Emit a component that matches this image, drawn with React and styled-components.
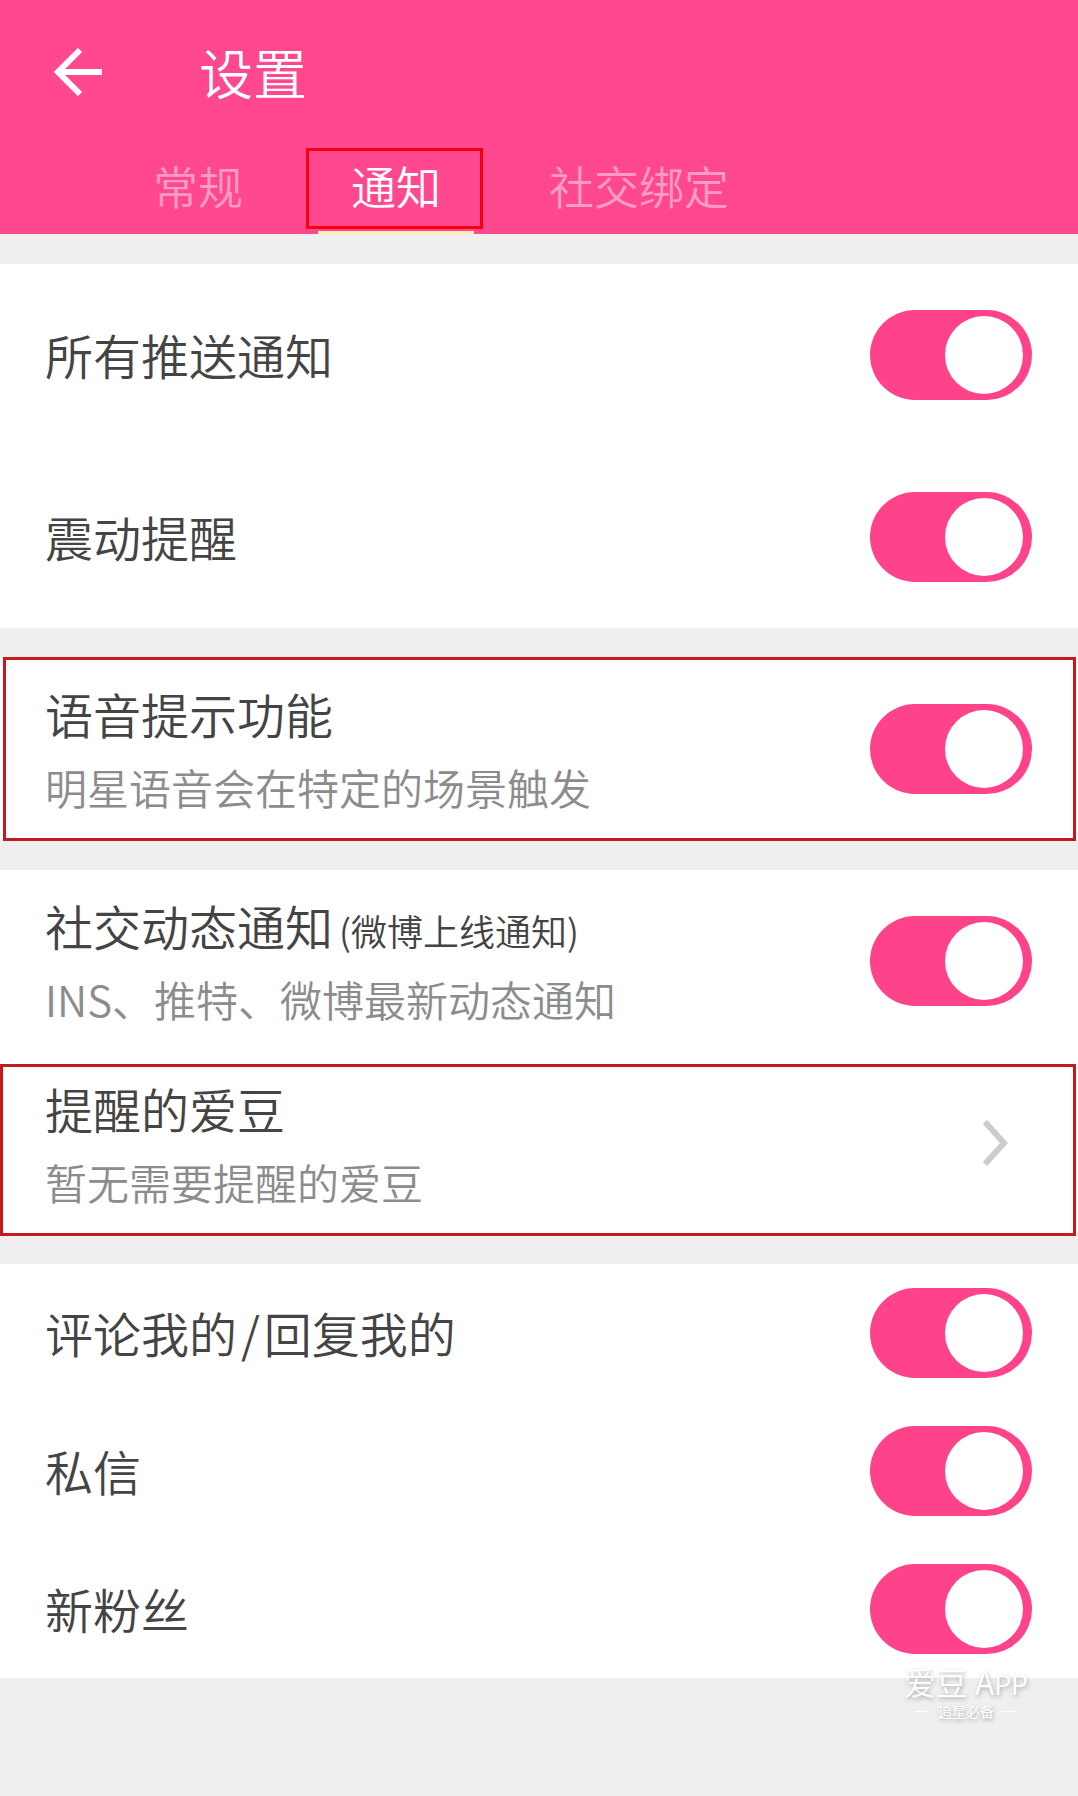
import React, { useState } from "react";
import styled, { createGlobalStyle } from "styled-components";

const GlobalStyle = createGlobalStyle`
  * {
    box-sizing: border-box;
  }

  body {
    margin: 0;
    background: #efefef;
    font-family: "Noto Sans CJK SC", "Noto Sans", sans-serif;
    font-weight: 350;
  }

  button {
    border: 0;
    padding: 0;
    background: none;
    font-family: inherit;
    font-weight: inherit;
    cursor: pointer;
  }
`;

const Page = styled.div`
  position: relative;
  min-height: 100vh;
  padding-bottom: 118px;
  background: #efefef;
`;

const Header = styled.header`
  background: #ff488d;
  color: #fff;
`;

const TitleBar = styled.div`
  display: flex;
  align-items: center;
  height: 144px;
  padding-left: 54px;
`;

const BackButton = styled.button`
  display: flex;
  width: 48px;
  height: 48px;
  margin-right: 97px;
  color: #fff;
`;

const Title = styled.h1`
  margin: 0;
  font-size: 54px;
  font-weight: 350;
  line-height: 80px;
`;

const Tabs = styled.div`
  display: flex;
  gap: 42px;
  height: 90px;
  padding-left: 120px;
`;

const Tab = styled.button`
  position: relative;
  padding: 0 33px 4px;
  border-bottom: 3px solid ${(props) => (props.$active ? "#fdeeb5" : "transparent")};
  color: ${(props) => (props.$active ? "#fff" : "#ff9cc3")};
  font-size: 45px;
  line-height: 80px;
  white-space: nowrap;
`;

const Mark = styled.span`
  position: absolute;
  inset: ${(props) => props.$inset};
  border: 3px solid ${(props) => props.$color || "#c41a1d"};
  pointer-events: none;
`;

const Section = styled.section`
  margin-top: 30px;
  background: #fff;
`;

const Row = styled.div`
  position: relative;
  display: flex;
  align-items: center;
  justify-content: space-between;
  width: 100%;
  height: ${(props) => (props.$compact ? "138px" : "182px")};
  padding: 0 46px 0 45px;
  text-align: left;

  label {
    padding-bottom: 2px;
  }
`;

const LinkRow = styled(Row)`
  padding-right: 70px;
`;

const Texts = styled.span`
  display: flex;
  flex-direction: column;
`;

const Name = styled.span`
  color: #444;
  font-size: 48px;
  line-height: 78px;
`;

const Extra = styled.small`
  margin-left: 6px;
  font-size: 36px;
  line-height: 1;
`;

const Slash = styled.span`
  padding: 0 4px;
`;

const Hint = styled.span`
  color: #8c8c8c;
  font-size: 42px;
  line-height: 70px;
`;

const Switch = styled.input`
  appearance: none;
  flex: none;
  display: flex;
  align-items: center;
  width: 162px;
  height: 90px;
  margin: 0;
  padding: 0 9px;
  border-radius: 45px;
  background: #ccc;
  cursor: pointer;

  &::before {
    content: "";
    width: 78px;
    height: 78px;
    border-radius: 50%;
    background: #fff;
  }

  &:checked {
    justify-content: flex-end;
    background: #ff438b;
  }
`;

const Watermark = styled.div`
  position: absolute;
  right: 50px;
  bottom: 76px;
  display: flex;
  flex-direction: column;
  align-items: center;
  color: #fff;
  text-shadow: 1px 2px 4px rgba(0, 0, 0, 0.3);
`;

const Brand = styled.span`
  font-size: 32px;
  line-height: 36px;

  small {
    font-size: 27px;
  }
`;

const Slogan = styled.span`
  display: flex;
  align-items: center;
  gap: 8px;
  font-size: 14px;
  font-weight: 400;
  line-height: 18px;

  &::before,
  &::after {
    content: "";
    width: 15px;
    height: 1px;
    background: #fff;
  }
`;

const ArrowLeft = () => (
  <svg width="48" height="48" viewBox="0 0 48 48" fill="none" stroke="currentColor" strokeWidth="6">
    <path d="M26 2L4 24l22 22M4 24h44" />
  </svg>
);

const Chevron = () => (
  <svg width="25" height="46" viewBox="0 0 25 46" fill="none" stroke="#ccc" strokeWidth="6">
    <path d="M2 2l19 21L2 44" />
  </svg>
);

const tabs = ["常规", "通知", "社交绑定"];

const initialValues = {
  push: true,
  vibrate: true,
  voice: true,
  social: true,
  comment: true,
  message: true,
  fans: true,
};

const App = () => {
  const [active, setActive] = useState("通知");
  const [values, setValues] = useState(initialValues);

  const handleChange = (e) => {
    setValues({ ...values, [e.target.name]: e.target.checked });
  };

  const renderSwitch = (name) => (
    <Switch type="checkbox" id={name} name={name} checked={values[name]} onChange={handleChange} />
  );

  return (
    <Page>
      <GlobalStyle />
      <Header>
        <TitleBar>
          <BackButton aria-label="返回">
            <ArrowLeft />
          </BackButton>
          <Title>设置</Title>
        </TitleBar>
        <Tabs role="tablist">
          {tabs.map((tab) => (
            <Tab
              key={tab}
              role="tab"
              aria-selected={tab === active}
              $active={tab === active}
              onClick={() => setActive(tab)}
            >
              {tab}
              {tab === active && <Mark $inset="4px -9px 2px -12px" $color="#f5000f" />}
            </Tab>
          ))}
        </Tabs>
      </Header>

      <Section>
        <Row>
          <Name as="label" htmlFor="push">所有推送通知</Name>
          {renderSwitch("push")}
        </Row>
        <Row>
          <Name as="label" htmlFor="vibrate">震动提醒</Name>
          {renderSwitch("vibrate")}
        </Row>
      </Section>

      <Section>
        <Row>
          <Texts as="label" htmlFor="voice">
            <Name>语音提示功能</Name>
            <Hint>明星语音会在特定的场景触发</Hint>
          </Texts>
          {renderSwitch("voice")}
          <Mark $inset="-1px 2px -1px 3px" />
        </Row>
      </Section>

      <Section>
        <Row>
          <Texts as="label" htmlFor="social">
            <Name>
              社交动态通知<Extra>(微博上线通知)</Extra>
            </Name>
            <Hint>INS、推特、微博最新动态通知</Hint>
          </Texts>
          {renderSwitch("social")}
        </Row>
        <LinkRow as="button">
          <Texts>
            <Name>提醒的爱豆</Name>
            <Hint>暂无需要提醒的爱豆</Hint>
          </Texts>
          <Chevron />
          <Mark $inset="12px 2px -2px 0" />
        </LinkRow>
      </Section>

      <Section>
        <Row $compact>
          <Name as="label" htmlFor="comment">
            评论我的<Slash>/</Slash>回复我的
          </Name>
          {renderSwitch("comment")}
        </Row>
        <Row $compact>
          <Name as="label" htmlFor="message">私信</Name>
          {renderSwitch("message")}
        </Row>
        <Row $compact>
          <Name as="label" htmlFor="fans">新粉丝</Name>
          {renderSwitch("fans")}
        </Row>
      </Section>

      <Watermark>
        <Brand>
          爱豆 A<small>PP</small>
        </Brand>
        <Slogan>追星必备</Slogan>
      </Watermark>
    </Page>
  );
};

export default App;
